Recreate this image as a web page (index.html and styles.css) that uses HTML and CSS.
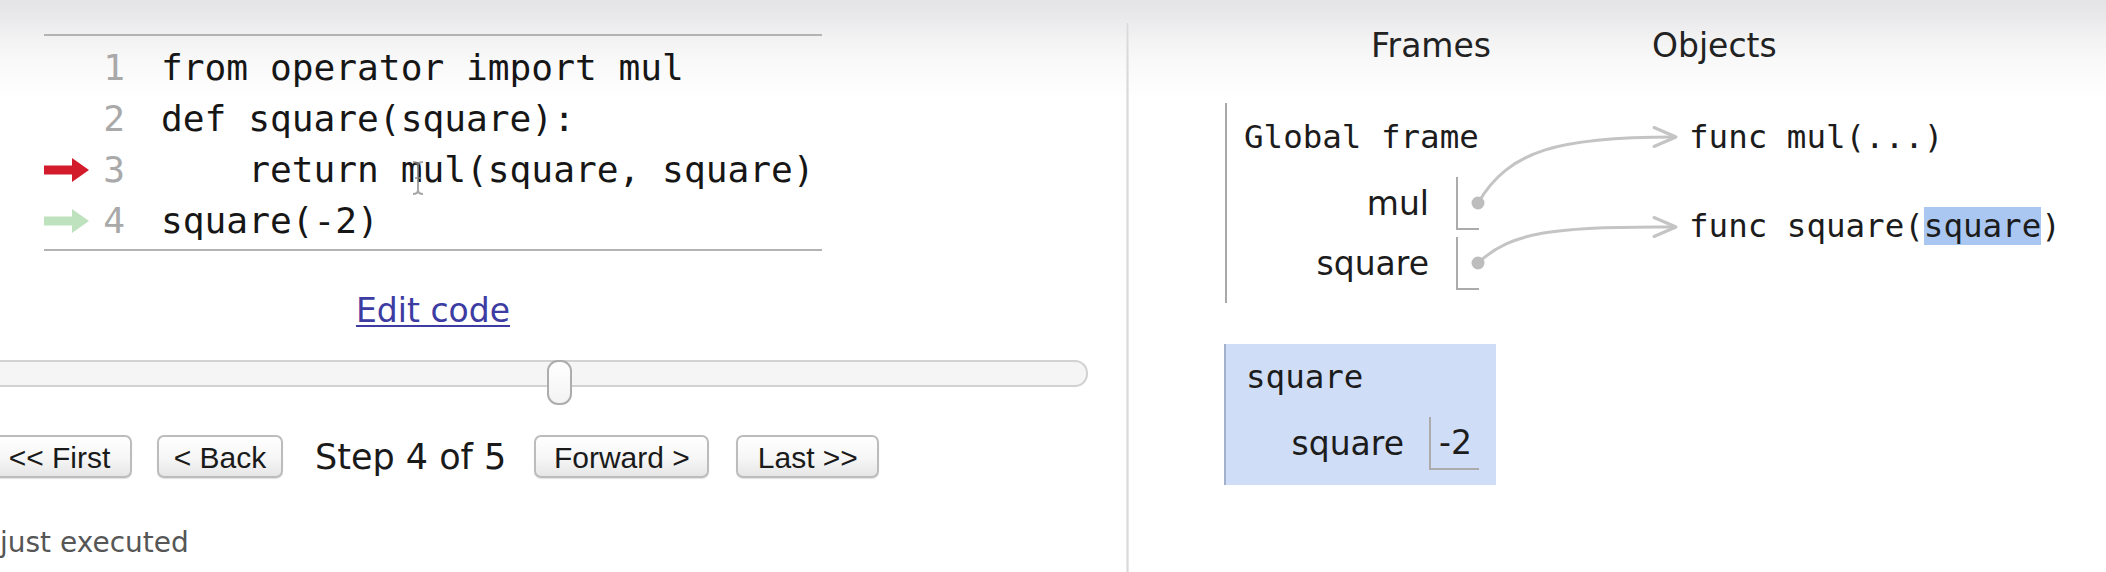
FILE: index.html
```html
<!DOCTYPE html>
<html lang="en">
<head>
<meta charset="utf-8">
<title>Python Tutor - visualize</title>
<link rel="stylesheet" href="styles.css">
</head>
<body>
<div class="page">
  <section class="code-panel">
    <div class="code">
      <div class="line"><span class="gutter"></span><span class="num">1</span><span class="src">from operator import mul</span></div>
      <div class="line"><span class="gutter"></span><span class="num">2</span><span class="src">def square(square):</span></div>
      <div class="line"><span class="gutter"><svg class="arrow arrow-cur" viewBox="0 0 46 26" width="46" height="26"><path d="M0 8.5 H28 V1 L45 13 L28 25 V17.5 H0 Z"/></svg></span><span class="num">3</span><span class="src">    return mul(square, square)</span></div>
      <div class="line"><span class="gutter"><svg class="arrow arrow-next" viewBox="0 0 46 26" width="46" height="26"><path d="M0 8.5 H28 V1 L45 13 L28 25 V17.5 H0 Z"/></svg></span><span class="num">4</span><span class="src">square(-2)</span></div>
      <svg class="ibeam" viewBox="0 0 16 34" width="16" height="34"><path d="M3 1 Q8 1 8 5 Q8 1 13 1 M8 5 V29 M3 33 Q8 33 8 29 Q8 33 13 33 M5 17 H11"/></svg>
    </div>
    <div class="edit"><a href="#">Edit code</a></div>
    <div class="slider">
      <div class="track"></div>
      <div class="thumb"></div>
    </div>
    <div class="nav">
      <button class="btn btn-first">&lt;&lt; First</button>
      <button class="btn btn-back">&lt; Back</button>
      <span class="step">Step 4 of 5</span>
      <button class="btn btn-forward">Forward &gt;</button>
      <button class="btn btn-last">Last &gt;&gt;</button>
    </div>
    <div class="legend">just executed</div>
  </section>
  <div class="divider"></div>
  <section class="viz">
    <div class="viz-head">
      <span class="h-frames">Frames</span>
      <span class="h-objects">Objects</span>
    </div>
    <div class="viz-body">
      <div class="frames">
        <div class="frame frame-global">
          <div class="frame-name">Global frame</div>
          <div class="vars">
            <div class="var"><span class="var-name">mul</span><span class="var-val"></span></div>
            <div class="var"><span class="var-name">square</span><span class="var-val"></span></div>
          </div>
        </div>
        <div class="frame frame-active">
          <div class="frame-name">square</div>
          <div class="vars">
            <div class="var"><span class="var-name">square</span><span class="var-val">-2</span></div>
          </div>
        </div>
      </div>
      <div class="objects">
        <div class="obj">func mul(...)</div>
        <div class="obj">func square(<span class="hl">square</span>)</div>
      </div>
    </div>
    <svg class="pointers" width="978" height="572" viewBox="0 0 978 572">
      <path class="ptr" d="M349 203 C 380 150, 430 137, 545 137"/>
      <path class="ptr" d="M525 127.5 L547 137 L525 146.5"/>
      <path class="ptr" d="M349 263 C 382 232, 425 226, 545 227"/>
      <path class="ptr" d="M525 217.5 L547 227 L525 236.5"/>
      <circle class="dot" cx="349" cy="203" r="6.5"/>
      <circle class="dot" cx="349" cy="263" r="6.5"/>
    </svg>
  </section>
</div>
</body>
</html>
```

FILE: styles.css
```css
html, body {
  margin: 0;
  padding: 0;
}

body {
  width: 2106px;
  height: 572px;
  overflow: hidden;
  background: linear-gradient(to bottom, #e4e3e6 0px, #e8e7ea 14px, #f2f2f3 38px, #f9f9fa 62px, #fdfdfd 88px, #ffffff 100px);
  color: #1c1c1c;
}

.page {
  display: flex;
  height: 572px;
}

/* ---------- left: code panel ---------- */
.code-panel {
  width: 1126px;
  flex: none;
  overflow: hidden;
}

.code {
  position: relative;
  margin: 34px 0 0 44px;
  width: 778px;
  border-top: 2px solid #b3b3b3;
  border-bottom: 2px solid #b3b3b3;
  padding: 6px 0 3px;
  font-family: "DejaVu Sans Mono", monospace;
  font-size: 36.2px;
}

.line {
  display: flex;
  align-items: center;
  height: 51px;
  line-height: 51px;
}

.gutter {
  width: 46px;
  height: 26px;
  flex: none;
  display: flex;
}

.arrow-cur path { fill: #d21c2c; }
.arrow-next path { fill: #bde2bd; }

.num {
  width: 35px;
  flex: none;
  text-align: right;
  color: #a9a9a9;
}

.src {
  padding-left: 36px;
  white-space: pre;
  color: #161616;
}

.ibeam {
  position: absolute;
  left: 366px;
  top: 125px;
  fill: none;
  stroke: #8a8a8a;
  stroke-width: 2;
  opacity: 0.75;
}

.edit {
  margin: 41px 0 0 44px;
  width: 778px;
  text-align: center;
  font-family: "DejaVu Sans", sans-serif;
  font-size: 33px;
  line-height: 37px;
}

.edit a {
  color: #3c3ca2;
  text-decoration: underline;
  text-decoration-thickness: 2px;
  text-underline-offset: 3px;
}

.slider {
  position: relative;
  margin-top: 31px;
  height: 45px;
}

.track {
  margin: 8px 0 0 -20px;
  width: 1108px;
  height: 27px;
  box-sizing: border-box;
  border: 2px solid #d2d2d2;
  border-radius: 13px;
  background: #f5f5f5;
}

.thumb {
  position: absolute;
  left: 547px;
  top: 0;
  width: 25px;
  height: 45px;
  box-sizing: border-box;
  border: 2px solid #adadad;
  border-radius: 11px;
  background: linear-gradient(#ffffff, #f3f3f3);
}

.nav {
  display: flex;
  align-items: center;
  height: 43px;
  margin: 30px 0 0 -13px;
}

.btn {
  height: 43px;
  padding: 3px 0 0;
  box-sizing: border-box;
  font-family: "Liberation Sans", Arial, sans-serif;
  font-size: 30px;
  color: #1a1a1a;
  background: linear-gradient(#ffffff 0%, #f6f6f6 55%, #e6e6e6 100%);
  border: 2px solid #bcbcbc;
  border-radius: 7px;
  box-shadow: 0 1px 1px rgba(0, 0, 0, 0.12);
}

.btn-first { width: 145px; }
.btn-back { width: 126px; margin-left: 25px; }
.btn-forward { width: 175px; }
.btn-last { width: 143px; margin-left: 27px; }

.step {
  margin: 0 28px 0 32px;
  font-family: "DejaVu Sans", sans-serif;
  font-size: 35px;
  color: #1a1a1a;
}

.legend {
  margin: 48px 0 0 0;
  font-family: "DejaVu Sans", sans-serif;
  font-size: 28px;
  line-height: 34px;
  color: #565656;
}

.divider {
  width: 3px;
  flex: none;
  margin-top: 23px;
  background: linear-gradient(to right, #eeeeee, #dadada, #eeeeee);
}

/* ---------- right: visualization ---------- */
.viz {
  position: relative;
  flex: 1;
  padding-top: 26px;
  color: #1c1c1c;
}

.viz-head {
  display: flex;
  padding-left: 242px;
  font-family: "DejaVu Sans", sans-serif;
  font-size: 33px;
  line-height: 40px;
  color: #222;
}

.h-objects {
  margin-left: 161px;
}

.viz-body {
  display: flex;
  margin-top: 37px;
  padding-left: 95px;
}

.frames {
  width: 272px;
  flex: none;
}

.frame-name {
  font-family: "DejaVu Sans Mono", monospace;
  font-size: 32.5px;
  line-height: 40px;
}

.vars {
  margin-top: 17px;
}

.var {
  display: flex;
  height: 60px;
}

.var-name {
  text-align: right;
  font-family: "DejaVu Sans", sans-serif;
  font-size: 33px;
  line-height: 60px;
}

.var-val {
  margin-top: 3px;
  height: 53px;
  box-sizing: border-box;
  border-left: 2px solid #ababab;
  border-bottom: 2px solid #ababab;
  font-family: "DejaVu Sans", sans-serif;
  font-size: 33px;
  line-height: 51px;
}

.frame-global {
  margin-left: 1px;
  border-left: 2px solid #a9a9a9;
  padding: 14px 0 9px 17px;
}

.frame-global .var-name { width: 185px; }
.frame-global .var-val { width: 23px; margin-left: 27px; }

.frame-active {
  margin-top: 41px;
  background: #d0ddf6;
  border-left: 2px solid #a3b1cc;
  padding: 13px 17px 11px 20px;
}

.frame-active .var-name { width: 158px; }
.frame-active .var-val { width: 50px; margin-left: 25px; padding-left: 8px; }

.objects {
  margin-left: 193px;
  padding-top: 14px;
}

.obj {
  font-family: "DejaVu Sans Mono", monospace;
  font-size: 32.5px;
  line-height: 40px;
  white-space: pre;
}

.obj + .obj {
  margin-top: 49px;
}

.hl {
  background: #a9c7f1;
}

.pointers {
  position: absolute;
  left: 0;
  top: 0;
  pointer-events: none;
}

.ptr {
  fill: none;
  stroke: #c4c4c4;
  stroke-width: 3;
  stroke-linecap: round;
  stroke-linejoin: round;
}

.dot {
  fill: #bdbdbd;
}
```
